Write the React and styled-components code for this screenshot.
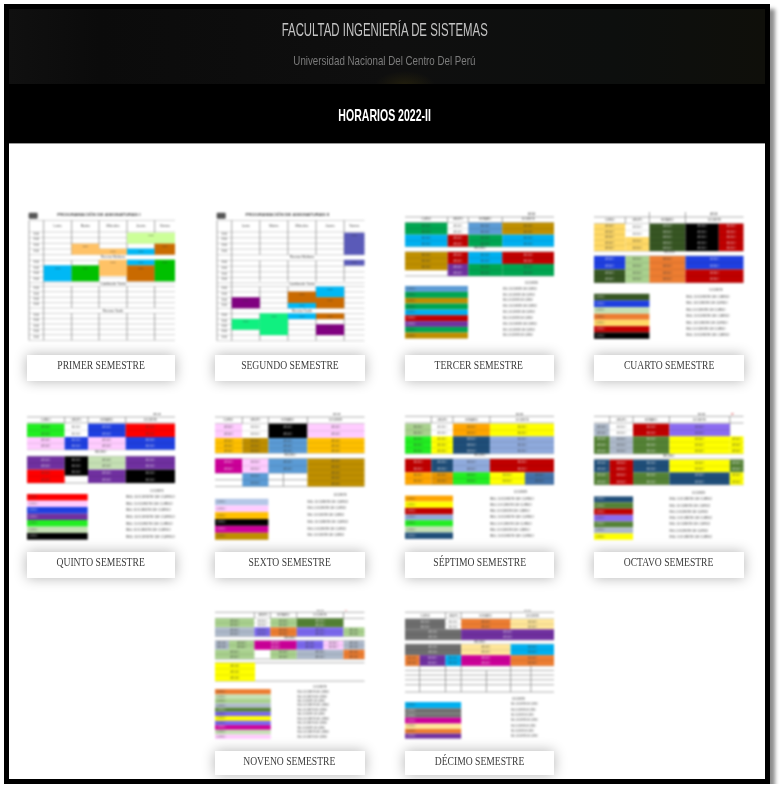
import styled, { createGlobalStyle } from "styled-components";

const GlobalStyle = createGlobalStyle`
  html, body {
    margin: 0;
    background: #fff;
  }
`;

const Frame = styled.div`
  width: 756px;
  margin: 4px 0 0 4px;
  border: 5px solid #000;
  background: #fff;
  box-shadow: 5px 5px 4px rgba(0, 0, 0, 0.45);
`;
const Hero = styled.header`
  height: 75px;
  display: flex;
  flex-direction: column;
  align-items: center;
  background:
    radial-gradient(ellipse 30px 14px at 396px 76px, rgba(70, 60, 10, 0.35), transparent),
    linear-gradient(90deg, #101010 0%, #0b0b0b 12%, #0f0f0f 50%, #0d0f0e 80%, #0f0f0a 100%);
`;
const HeroTitle = styled.h1`
  margin: 11px 4px 0 0;
  font: 400 19px/20px "Liberation Sans", sans-serif;
  color: #c4c4c4;
  white-space: nowrap;
  transform: scaleX(0.6);
  filter: blur(0.4px);
`;
const HeroSub = styled.p`
  margin: 13px 5px 0 0;
  font: 400 13px/16px "Liberation Sans", sans-serif;
  color: #7c7c7c;
  white-space: nowrap;
  transform: scaleX(0.75);
  filter: blur(0.4px);
`;
const TitleBar = styled.div`
  height: 60px;
  display: flex;
  align-items: center;
  justify-content: center;
  background: #000;
  border-bottom: 1px solid #999;
  box-sizing: border-box;
`;
const BarTitle = styled.h2`
  margin: 4px 4px 0 0;
  font: 700 17px/20px "Liberation Sans", sans-serif;
  color: #fff;
  white-space: nowrap;
  transform: scaleX(0.62);
  filter: blur(0.35px);
`;
const Grid = styled.main`
  display: grid;
  grid-template-columns: 148px 149.5px 149.5px 149.5px;
  grid-template-rows: 169px 165px 165px;
  column-gap: 40px;
  row-gap: 32px;
  padding: 68px 0 4px 18px;
`;
const Card = styled.article`
  display: flex;
  flex-direction: column;
  justify-content: space-between;
  grid-column-start: ${(p) => p.$start || "auto"};
`;
const Thumb = styled.svg`
  display: block;
  width: 100%;
  filter: blur(1.1px);
`;
const Label = styled.div`
  height: ${(p) => p.$h}px;
  box-sizing: border-box;
  padding-top: 2px;
  display: flex;
  align-items: flex-start;
  justify-content: center;
  background: #fff;
  box-shadow: 0 0 13px rgba(0, 0, 0, 0.3);
  font: 400 13px/15px "Liberation Serif", serif;
  color: #3c3c3c;
`;
const LabelText = styled.span`
  white-space: nowrap;
  transform: scaleX(0.74);
  filter: blur(0.35px);
`;

const white = "#fff";
const green = "#00a651";
const sky = "#00b0f0";
const gold = "#bf8f00";
const red = "#c00000";
const purple = "#7030a0";
const blue = "#1f3fe0";
const steel = "#5b9bd5";
const sand = "#ffd966";
const forest = "#375623";
const leaf = "#c5e0b4";
const orange = "#ed7d31";
const pink = "#ffccff";
const amber = "#ffc000";
const magenta = "#cc0099";
const yellow = "#ffff00";
const lime = "#22ee22";
const periwinkle = "#8faadc";
const navy = "#1f4e79";
const moss = "#548235";
const slate = "#adb9ca";
const violet = "#7b68ee";
const sage = "#a9d18e";
const grey = "#6e6e6e";

const hours = [88, 105, 122, 139, 173, 190, 207, 224, 251, 268, 285, 300, 332, 348, 364, 380, 397];

const timetable = (x, right, fills, captions, title) => ({
  box: [x[0] - 6, 20, right - x[0] + 6, 390],
  fills,
  plain: true,
  thin: true,
  hLines: [45, 80, 97, 114, 131, 148, 165, 182, 199, 216, 232, 243, 259, 276, 292, 308, 324, 340, 356, 372, 388, 405].map((y) => [y, x[0], right]),
  vLines: x.flatMap((v, i) =>
    i < 2
      ? [[v, 45, 405]]
      : [[v, 45, 148], [v, 165, 228], [v, 243, 308], [v, 323, 405]]
  ),
  captions: [
    [x[0] + 100 + (right - x[0]) / 4, 31, title, 9, 700, 250],
    ...["Lunes", "Martes", "Miércoles", "Jueves", "Viernes"].map((d, i) => [(x[i + 1] + (x[i + 2] || right)) / 2, 66, d, 9]),
    ...hours.map((y) => [x[0] + 22, y, "8:00", 8]),
    ...captions,
  ],
  logo: [x[0] - 1, 22],
});

const sem1Fills = [
  [322, 82, 466, 115, "#ccff99"],
  [156, 115, 238, 148, "#ffc266"],
  [238, 130, 322, 148, "#ffc266"],
  [322, 130, 405, 148, "#00b8f5"],
  [405, 115, 466, 148, "#c96a00"],
  [238, 163, 322, 212, "#ffc266"],
  [322, 163, 405, 180, "#00b8f5"],
  [322, 180, 405, 228, "#c96a00"],
  [405, 163, 466, 228, "#00c000"],
  [72, 180, 156, 228, "#00b8f5"],
  [156, 180, 238, 228, "#00c000"],
];
const sem2Fills = [
  [972, 82, 1033, 148, "#5a5ab8"],
  [972, 163, 1033, 180, "#5a5ab8"],
  [636, 275, 720, 308, "#800080"],
  [804, 258, 888, 292, "#c96a00"],
  [804, 292, 888, 308, "#00b8f5"],
  [888, 243, 972, 275, "#00b8f5"],
  [888, 275, 972, 308, "#c96a00"],
  [720, 323, 804, 388, "#10f080"],
  [636, 340, 720, 372, "#10f080"],
  [804, 323, 888, 340, "#00b8f5"],
  [888, 323, 972, 340, "#c96a00"],
  [888, 356, 972, 388, "#800080"],
];

// stripes: [y, colour] pairs, each one runs down to the next y
const stripes = (x1, x2, stops, end) =>
  stops.map(([y, c], i) => [x1, y, x2, i + 1 < stops.length ? stops[i + 1][0] : end, c]);

const semesters = [
  {
    name: "PRIMER SEMESTRE",
    sheet: timetable([28, 72, 156, 238, 322, 405], 466, sem1Fills, [[280, 159, "Receso Mañana", 10], [280, 239, "Cambio de Turno", 10], [280, 319, "Receso Tarde", 10]], "PROGRAMACIÓN DE ASIGNATURAS I"),
  },
  {
    name: "SEGUNDO SEMESTRE",
    sheet: timetable([592, 636, 720, 804, 888, 972], 1033, sem2Fills, [[846, 159, "Receso Mañana", 10], [846, 239, "Cambio de Turno", 10], [846, 319, "Receso Tarde", 10]], "PROGRAMACIÓN DE ASIGNATURAS II"),
  },
  {
    name: "TERCER SEMESTRE",
    sheet: {
      box: [28, 30, 449, 380],
      fills: [
        [28, 62, 156, 98, green], [156, 62, 218, 98, white], [218, 62, 320, 98, steel], [320, 62, 477, 98, gold],
        [28, 98, 156, 134, sky], [156, 98, 218, 134, red], [218, 98, 320, 134, green], [320, 98, 477, 134, sky],
        [28, 150, 156, 205, gold], [156, 150, 218, 186, red], [218, 150, 320, 186, sky], [320, 150, 477, 186, red],
        [156, 186, 218, 222, purple], [218, 186, 320, 222, green], [320, 186, 477, 222, green],
      ],
      legend: stripes(28, 217, [[252, steel], [270, green], [288, gold], [305, green], [323, sky], [340, red], [358, purple], [375, green], [392, gold]], 410),
      hLines: [[45, 28, 477], [62, 28, 477], [134, 28, 477], [150, 28, 477], [222, 28, 477]],
      vLines: [[156, 45, 62], [218, 45, 62], [320, 45, 62]],
      captions: [[408, 40, "AULA", 8], [253, 142, "RECESO", 8], [92, 55, "CURSO", 8], [187, 55, "GRUPO", 8], [269, 55, "HORARIO", 8], [398, 55, "DOCENTE", 8]],
      staff: { x: 322, w: 102, ys: [260, 278, 295, 313, 331, 348, 366, 383, 400], head: [408, 243] },
    },
  },
  {
    name: "CUARTO SEMESTRE",
    sheet: {
      box: [596, 30, 448, 380],
      fills: [
        [596, 65, 690, 147, sand], [690, 65, 762, 105, white], [690, 105, 762, 147, sand], [762, 65, 870, 147, forest], [870, 65, 970, 147, "#000"], [970, 65, 1044, 147, red],
        [596, 162, 690, 202, blue], [596, 202, 690, 242, forest], [690, 162, 762, 242, sage], [762, 162, 870, 242, orange], [870, 162, 1044, 202, blue], [870, 202, 1044, 242, red],
      ],
      legend: stripes(596, 762, [[275, forest], [295, blue], [315, leaf], [335, orange], [353, sand], [372, red], [391, "#000"]], 410),
      hLines: [[45, 596, 1044], [65, 596, 1044], [147, 596, 1044], [162, 596, 1044], [242, 596, 1044]],
      vLines: [[690, 45, 65], [762, 30, 65], [870, 30, 65]],
      captions: [[955, 40, "AULA", 8], [822, 152, "RECESO", 8], [643, 56, "CURSO", 8], [726, 56, "GRUPO", 8], [816, 56, "HORARIO", 8], [957, 56, "DOCENTE", 8]],
      staff: { x: 872, w: 130, ys: [285, 304, 324, 343, 362, 381, 400], head: [962, 265] },
    },
  },
  {
    name: "QUINTO SEMESTRE",
    sheet: {
      box: [22, 25, 444, 380],
      fills: [
        [22, 57, 135, 97, lime], [135, 57, 205, 97, white], [205, 57, 318, 97, blue], [318, 57, 466, 97, "#ff0000"],
        [22, 97, 135, 135, pink], [135, 97, 205, 135, blue], [205, 97, 318, 135, pink], [318, 97, 466, 135, blue],
        [22, 155, 135, 195, purple], [22, 195, 135, 235, "#ff0000"], [135, 155, 205, 213, "#000"],
        [205, 155, 318, 195, leaf], [205, 195, 318, 235, purple], [318, 155, 466, 195, purple], [318, 195, 466, 235, "#000"],
      ],
      legend: stripes(22, 204, [[268, "#ff0000"], [288, pink], [307, blue], [327, purple], [346, lime], [366, leaf], [385, "#000"]], 405),
      hLines: [[37, 22, 466], [55, 22, 466], [135, 22, 466], [155, 22, 466], [235, 22, 466]],
      vLines: [[135, 37, 55], [205, 37, 55], [318, 37, 55]],
      captions: [[412, 32, "AULA", 8], [243, 146, "RECESO", 8], [78, 49, "CURSO", 8], [170, 49, "GRUPO", 8], [261, 49, "HORARIO", 8], [392, 49, "DOCENTE", 8]],
      staff: { x: 318, w: 147, ys: [277, 297, 317, 337, 357, 376, 396], head: [412, 258] },
    },
  },
  {
    name: "SEXTO SEMESTRE",
    sheet: {
      box: [585, 25, 448, 380],
      fills: [
        [585, 57, 667, 100, pink], [667, 57, 745, 100, white], [745, 57, 862, 100, "#000"], [862, 57, 1033, 100, pink],
        [585, 100, 667, 145, amber], [667, 100, 745, 145, gold], [745, 100, 862, 145, steel], [862, 100, 1033, 145, amber],
        [585, 162, 667, 205, magenta], [667, 162, 745, 205, pink], [745, 162, 862, 205, steel], [862, 162, 1033, 245, gold],
        [667, 205, 745, 245, steel],
      ],
      legend: stripes(585, 745, [[282, "#b4c7e7"], [302, pink], [322, amber], [343, "#000"], [363, magenta], [384, gold]], 405),
      hLines: [[37, 585, 1033], [57, 585, 1033], [145, 585, 1033], [162, 585, 1033], [205, 585, 862], [225, 585, 862], [245, 585, 1033]],
      vLines: [[667, 37, 57], [745, 37, 57], [862, 37, 57], [790, 205, 245]],
      captions: [[950, 32, "AULA", 8], [810, 153, "RECESO", 8], [625, 50, "CURSO", 8], [706, 50, "GRUPO", 8], [803, 50, "HORARIO", 8], [947, 50, "DOCENTE", 8]],
      staff: { x: 862, w: 122, ys: [291, 311, 331, 352, 372, 392], head: [960, 270] },
    },
  },
  {
    name: "SÉPTIMO SEMESTRE",
    sheet: {
      box: [28, 25, 449, 380],
      fills: [
        [28, 57, 107, 95, sage], [107, 57, 172, 95, white], [172, 57, 283, 95, "#ffa500"], [283, 57, 477, 95, yellow],
        [28, 95, 107, 147, lime], [107, 95, 172, 147, yellow], [172, 95, 283, 147, navy], [283, 95, 477, 147, periwinkle],
        [28, 163, 107, 203, red], [107, 163, 172, 203, navy], [172, 163, 283, 203, periwinkle], [283, 163, 477, 203, red],
        [28, 203, 107, 240, "#ffa500"], [107, 203, 172, 240, "#e69500"], [172, 203, 283, 240, lime], [283, 203, 388, 240, yellow], [388, 203, 477, 240, "#4472a8"],
      ],
      legend: stripes(28, 172, [[273, "#ffa500"], [291, yellow], [310, red], [330, periwinkle], [347, lime], [366, leaf], [384, navy]], 403),
      hLines: [[35, 28, 477], [55, 28, 477], [147, 28, 477], [163, 28, 477], [240, 28, 477]],
      vLines: [[107, 35, 55], [172, 35, 55], [283, 35, 55]],
      captions: [[372, 31, "AULA", 8], [253, 155, "RECESO", 8], [140, 49, "GRUPO", 8], [228, 49, "HORARIO", 8], [380, 49, "DOCENTE", 8]],
      staff: { x: 283, w: 132, ys: [283, 301, 320, 338, 357, 376, 394], head: [376, 263] },
    },
  },
  {
    name: "OCTAVO SEMESTRE",
    sheet: {
      box: [596, 25, 448, 380],
      fills: [
        [596, 57, 643, 95, slate], [643, 57, 713, 95, white], [713, 57, 822, 95, red], [822, 57, 1003, 95, "#8b6cf0"],
        [596, 95, 643, 147, moss], [643, 95, 713, 147, slate], [713, 95, 822, 147, moss], [822, 95, 1003, 147, yellow], [1003, 95, 1044, 147, yellow],
        [596, 165, 643, 203, navy], [596, 203, 643, 240, moss], [643, 165, 713, 240, red], [713, 165, 822, 203, navy], [713, 203, 822, 240, moss],
        [822, 165, 1003, 203, yellow], [822, 203, 1003, 240, navy], [1003, 165, 1044, 203, moss], [1003, 203, 1044, 240, yellow],
      ],
      legend: stripes(596, 713, [[275, navy], [293, moss], [312, red], [330, "#8b6cf0"], [350, moss], [368, slate], [386, yellow]], 405),
      hLines: [[35, 596, 1044], [55, 596, 1044], [147, 596, 1044], [163, 596, 1044], [240, 596, 1044]],
      vLines: [[643, 35, 55], [713, 35, 55], [822, 35, 55], [1003, 35, 95]],
      captions: [[918, 31, "AULA", 8], [820, 156, "RECESO", 8], [678, 49, "GRUPO", 8], [767, 49, "HORARIO", 8], [912, 49, "DOCENTE", 8], [1012, 31, "N°", 8, 700, 0, "#e05050"]],
      staff: { x: 822, w: 128, ys: [284, 303, 322, 340, 359, 378, 396], head: [910, 265] },
    },
  },
  {
    name: "NOVENO SEMESTRE",
    start: 2,
    h: 24,
    sheet: {
      box: [30, 15, 448, 387],
      fills: [
        [30, 40, 148, 67, sage], [148, 40, 196, 67, white], [196, 40, 275, 67, sage], [275, 40, 415, 67, moss],
        [30, 67, 148, 94, slate], [148, 67, 196, 94, violet], [196, 67, 275, 94, orange], [275, 67, 415, 94, violet], [415, 67, 478, 94, sage],
        [30, 107, 72, 134, slate], [72, 107, 148, 134, sage], [148, 107, 275, 134, magenta], [275, 107, 355, 134, violet], [355, 107, 415, 134, pink], [415, 107, 478, 134, slate],
        [30, 134, 148, 162, sage], [196, 134, 275, 162, sage], [275, 134, 415, 162, slate], [415, 134, 478, 162, orange],
        [30, 173, 150, 228, yellow],
      ],
      legend: stripes(30, 197, [[252, orange], [268, leaf], [281, sage], [295, slate], [308, moss], [320, violet], [333, yellow], [347, violet], [360, magenta], [374, leaf], [388, pink]], 402),
      hLines: [[22, 30, 478], [40, 30, 478], [94, 30, 478], [107, 30, 478], [162, 30, 478], [173, 30, 478], [228, 30, 478]],
      vLines: [[148, 22, 40], [196, 22, 40], [275, 22, 40], [415, 22, 40]],
      captions: [[345, 19, "AULA", 8], [255, 101, "RECESO", 8], [174, 33, "GRUPO", 8], [235, 33, "HORARIO", 8], [345, 33, "DOCENTE", 8], [423, 19, "N°", 8, 700, 0, "#e05050"]],
      staff: { x: 277, w: 95, ys: [262, 275, 288, 301, 315, 328, 342, 355, 368, 382, 395], head: [345, 246] },
    },
  },
  {
    name: "DÉCIMO SEMESTRE",
    h: 24,
    sheet: {
      box: [598, 15, 450, 387],
      fills: [
        [598, 42, 720, 73, grey], [720, 42, 767, 73, white], [767, 42, 916, 73, orange], [916, 42, 1048, 73, "#ffe699"],
        [598, 73, 767, 105, grey], [767, 73, 1048, 105, purple],
        [598, 118, 767, 151, grey], [767, 118, 916, 151, "#ffe699"], [916, 118, 1048, 151, sky],
        [598, 151, 642, 183, orange], [642, 151, 720, 183, purple], [720, 151, 767, 183, sky], [767, 151, 916, 183, magenta], [916, 151, 1048, 183, orange],
      ],
      legend: stripes(598, 767, [[292, sky], [311, grey], [327, grey], [339, magenta], [357, "#ffe699"], [373, orange], [387, purple]], 402),
      hLines: [[22, 598, 1048], [42, 598, 1048], [105, 598, 1048], [118, 598, 1048], [183, 598, 1048], [197, 598, 1048], [211, 598, 1048], [225, 598, 1048], [240, 598, 1048], [262, 598, 1048]],
      vLines: [[720, 22, 42], [767, 22, 42], [916, 22, 42], [642, 183, 262], [720, 183, 262], [767, 183, 262], [843, 197, 262], [916, 183, 262], [977, 183, 262]],
      captions: [[967, 19, "AULA", 8], [823, 113, "RECESO", 8], [659, 35, "CURSO", 8], [744, 35, "GRUPO", 8], [841, 35, "HORARIO", 8], [982, 35, "DOCENTE", 8]],
      staff: { x: 917, w: 81, ys: [298, 315, 331, 347, 363, 379, 395], head: [940, 284] },
    },
  },
];

const textOn = (c) => (["#000", forest, navy, purple, red, blue, grey, moss, magenta].includes(c) ? "#e8e8e8" : "#3a3a3a");

function Sheet({ data }) {
  const { box, fills, legend = [], hLines, vLines, captions, staff, plain, logo, thin } = data;
  const [bx, by, bw, bh] = box;
  return (
    <Thumb viewBox={`${bx} ${by} ${bw} ${bh}`} fontFamily="Liberation Sans, sans-serif">
      {hLines.map(([y, x1, x2], i) => (
        <line key={i} x1={x1} x2={x2} y1={y} y2={y} stroke={thin ? "#a8a8a8" : "#8a8a8a"} strokeWidth={thin ? 1.5 : 2} />
      ))}
      {vLines.map(([x, y1, y2], i) => (
        <line key={i} x1={x} x2={x} y1={y1} y2={y2} stroke="#6a6a6a" strokeWidth="1.8" />
      ))}
      {fills.map(([x1, y1, x2, y2, c], i) => {
        const rows = plain ? 1 : Math.max(1, Math.round((y2 - y1) / 18));
        const step = (y2 - y1) / rows;
        return (
          <g key={i}>
            <rect x={x1} y={y1} width={x2 - x1} height={y2 - y1} fill={c} />
            {!plain && Array.from({ length: rows }, (_, r) => (
              <g key={r}>
                {r > 0 && <line x1={x1} x2={x2} y1={y1 + step * r} y2={y1 + step * r} stroke="#000" strokeOpacity="0.3" />}
                <text
                  x={(x1 + x2) / 2}
                  y={y1 + step * r + step / 2 + 3}
                  fontSize="8"
                  textAnchor="middle"
                  fill={textOn(c)}
                  fillOpacity="0.7"
                >
                  AULA 1
                </text>
              </g>
            ))}
            {plain && (
              <text x={(x1 + x2) / 2} y={y1 + 10} fontSize="6" textAnchor="middle" fill="#333">
                Curso
              </text>
            )}
          </g>
        );
      })}
      {legend.map(([x1, y1, x2, y2, c], i) => (
        <g key={i}>
          <rect x={x1} y={y1} width={x2 - x1} height={y2 - y1} fill={c} />
          <text x={x1 + 3} y={(y1 + y2) / 2 + 3} fontSize="8" fill={textOn(c)} fillOpacity="0.6">
            CURSO
          </text>
        </g>
      ))}
      {logo && <rect x={logo[0]} y={logo[1]} width="27" height="18" rx="3" fill="#555" />}
      {captions.map(([x, y, text, size, weight = 400, len = 0, color = "#444"], i) => (
        <text
          key={i}
          x={x}
          y={y}
          fontSize={size}
          fontWeight={weight}
          fill={color}
          textAnchor="middle"
          {...(len ? { textLength: len, lengthAdjust: "spacingAndGlyphs" } : {})}
        >
          {text}
        </text>
      ))}
      {staff && (
        <>
          <text x={staff.head[0]} y={staff.head[1] + 3} fontSize="8" fill="#444" textAnchor="middle">
            DOCENTE
          </text>
          {staff.ys.map((y, i) => (
            <text key={i} x={staff.x} y={y + 3} fontSize="8" fill="#444" textLength={staff.w - (i % 3) * 6} lengthAdjust="spacingAndGlyphs">
              ING. DOCENTE DE CURSO
            </text>
          ))}
        </>
      )}
    </Thumb>
  );
}

export default function App() {
  return (
    <>
      <GlobalStyle />
      <Frame>
        <Hero>
          <HeroTitle>FACULTAD INGENIERÍA DE SISTEMAS</HeroTitle>
          <HeroSub>Universidad Nacional Del Centro Del Perú</HeroSub>
        </Hero>
        <TitleBar>
          <BarTitle>HORARIOS 2022-II</BarTitle>
        </TitleBar>
        <Grid>
          {semesters.map((s) => (
            <Card key={s.name} $start={s.start}>
              <Sheet data={s.sheet} />
              <Label $h={s.h || 26}>
                <LabelText>{s.name}</LabelText>
              </Label>
            </Card>
          ))}
        </Grid>
      </Frame>
    </>
  );
}
